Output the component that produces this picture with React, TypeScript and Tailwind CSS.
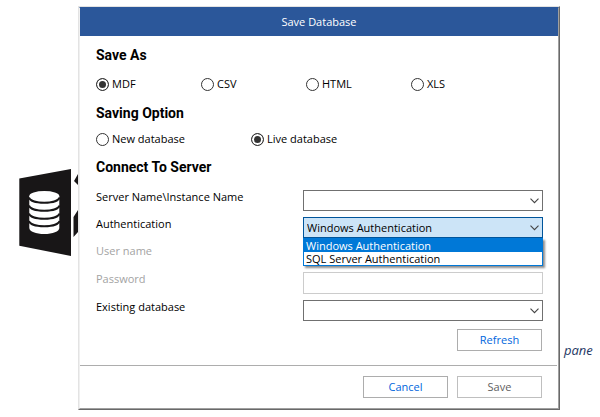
import { useState } from 'react';
import type { ReactNode } from 'react';

const formats = ['MDF', 'CSV', 'HTML', 'XLS'];
const saveOptions = ['New database', 'Live database'];
const authModes = ['Windows Authentication', 'SQL Server Authentication'];

const selectClass = 'block h-[21px] w-full appearance-none rounded-none border pl-[3px] pr-5 outline-none';

function Radio({ name, label, checked, onChange }: { name: string; label: string; checked: boolean; onChange: () => void }) {
  return (
    <label className="flex items-center gap-[3px]">
      <input
        type="radio"
        name={name}
        checked={checked}
        onChange={onChange}
        className="size-[13px] shrink-0 appearance-none rounded-full border border-[#333] bg-white checked:bg-[#333] checked:shadow-[inset_0_0_0_2px_#fff]"
      />
      {label}
    </label>
  );
}

function Heading({ children }: { children: ReactNode }) {
  return <h2 className="font-['Roboto',sans-serif] text-[14px] leading-4 font-bold">{children}</h2>;
}

function Chevron() {
  return (
    <svg className="pointer-events-none absolute top-[8px] right-[4px]" width="9" height="6" viewBox="0 0 9 6" fill="none" stroke="#444" strokeWidth="1.1">
      <path d="M0.5 0.7 L4.5 4.7 L8.5 0.7" />
    </svg>
  );
}

function Field({ id, label, disabled, children }: { id: string; label: string; disabled?: boolean; children: ReactNode }) {
  return (
    <div className="flex items-start">
      <label htmlFor={id} className={disabled ? 'w-[207px] shrink-0 leading-[14px] text-[#a3a3a3]' : 'w-[207px] shrink-0 leading-[14px]'}>
        {label}
      </label>
      <div className="relative flex-1">{children}</div>
    </div>
  );
}

function Logo() {
  return (
    <svg width="78" height="100" viewBox="0 160 78 100" aria-hidden="true">
      <path d="M19.3 178.5 L71 169 V256 L19.3 245.8 Z" fill="#181617" />
      <path d="M78 174 V185 L74 181 Z M78 210 V232 L73.5 237 V217 Z" fill="#181617" />
      <path d="M29.3 196 V228 C29.3 231.500 36 234 44.300 234 S59.300 231.500 59.300 228 V196 Z" fill="#fff" />
      <ellipse cx="44.3" cy="196" rx="15" ry="5" fill="#fff" />
      <path
        d="M29 197.500 C31 204.500 57.500 204.500 59.500 197.500 M29 205.500 C31 212.500 57.500 212.500 59.500 205.500 M29 213.500 C31 220.500 57.500 220.500 59.500 213.500 M29 221 C31 228 57.500 228 59.500 221"
        fill="none"
        stroke="#181617"
        strokeWidth="2"
      />
    </svg>
  );
}

export default function App() {
  const [format, setFormat] = useState('MDF');
  const [saveOption, setSaveOption] = useState('Live database');
  const [auth, setAuth] = useState('Windows Authentication');
  const [listOpen, setListOpen] = useState(true);

  return (
    <div className="flex items-start bg-white pt-1.5 font-['Open_Sans',sans-serif] text-[11px] leading-4 text-black">
      <div className="w-[78px] shrink-0 pt-[154px]">
        <Logo />
      </div>

      <div role="dialog" aria-label="Save Database" className="flex-1 border border-t-[#e3e3e3] border-l-[#e3e3e3] border-r-[#696969] border-b-[#696969]">
        <div className="border border-t-[#2b579a] border-l-[#f0f0f0] border-r-[#a0a0a0] border-b-[#a0a0a0]">
          <h1 className="bg-[#2b579a] text-center leading-[28px] text-white">Save Database</h1>

          <form className="pt-[11px] pr-[15px] pl-4" onSubmit={e => e.preventDefault()}>
            <Heading>Save As</Heading>
            <div className="mt-[13px] grid grid-cols-[105px_105px_105px_1fr]">
              {formats.map(item => (
                <Radio key={item} name="format" label={item} checked={format === item} onChange={() => setFormat(item)} />
              ))}
            </div>

            <div className="mt-[13px]">
              <Heading>Saving Option</Heading>
            </div>
            <div className="mt-[10px] grid grid-cols-[155px_1fr]">
              {saveOptions.map(item => (
                <Radio key={item} name="option" label={item} checked={saveOption === item} onChange={() => setSaveOption(item)} />
              ))}
            </div>

            <div className="mt-[12px]">
              <Heading>Connect To Server</Heading>
            </div>
            <div className="mt-[15px] flex flex-col gap-1.5">
              <Field id="server" label="Server Name\Instance Name">
                <select id="server" className={`${selectClass} border-[#707070] bg-white`} />
                <Chevron />
              </Field>
              <Field id="auth" label="Authentication">
                <select
                  id="auth"
                  value={auth}
                  onChange={e => setAuth(e.target.value)}
                  onClick={() => setListOpen(!listOpen)}
                  className={`${selectClass} border-[#00559b] bg-[#cce4f7]`}
                >
                  {authModes.map(mode => (
                    <option key={mode}>{mode}</option>
                  ))}
                </select>
                <Chevron />
                {listOpen && (
                  <ul
                    role="listbox"
                    aria-label="Authentication"
                    className="absolute inset-x-0 top-full z-10 border border-[#0078d7] bg-white leading-[13px] shadow-[2px_2px_2px_rgba(0,0,0,0.45)]"
                  >
                    {authModes.map(mode => (
                      <li
                        key={mode}
                        role="option"
                        aria-selected={mode === auth}
                        onClick={() => {
                          setAuth(mode);
                          setListOpen(false);
                        }}
                        className="px-[2px] aria-selected:bg-[#0078d7] aria-selected:text-white"
                      >
                        {mode}
                      </li>
                    ))}
                  </ul>
                )}
              </Field>
              <Field id="user" label="User name" disabled>
                <input id="user" type="text" disabled className="block h-[22px] w-full border border-[#ccc] px-1" />
              </Field>
              <Field id="password" label="Password" disabled>
                <input id="password" type="password" disabled className="block h-[22px] w-full border border-[#ccc] px-1" />
              </Field>
              <Field id="existing" label="Existing database">
                <select id="existing" className={`${selectClass} border-[#707070] bg-white`} />
                <Chevron />
              </Field>
            </div>

            <div className="mt-2 flex justify-end pr-px">
              <button type="button" className="h-[22px] w-[85px] border border-[#adadad] text-[#0066dd]">
                Refresh
              </button>
            </div>
          </form>

          <div className="mt-[14px] mr-px flex justify-end gap-[9px] border-t border-[#adadad] pt-[10px] pr-[15px] pb-[10px]">
            <button type="button" className="h-[22px] w-[85px] border border-[#adadad] text-[#0066dd]">
              Cancel
            </button>
            <button type="button" className="h-[22px] w-[85px] border border-[#bfbfbf] text-[#606060]">
              Save
            </button>
          </div>
        </div>
      </div>

      <p className="w-10 shrink-0 pt-[336px] pl-1 text-[13px] text-[#1f3864] italic">pane</p>
    </div>
  );
}
